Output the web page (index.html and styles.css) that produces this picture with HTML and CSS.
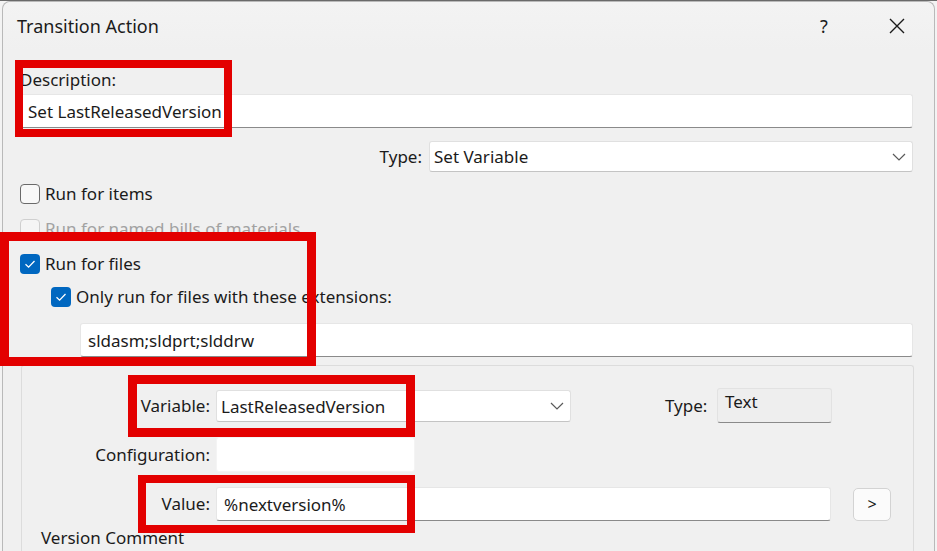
FILE: index.html
```html
<!DOCTYPE html>
<html>
<head>
<meta charset="utf-8">
<link rel="stylesheet" href="styles.css">
</head>
<body>
<div class="topstrip"></div>
<div class="dialog">
  <div class="titlebar">
    <span class="title">Transition Action</span>
    <span class="help">?</span>
    <span class="close">
      <svg width="18" height="18" viewBox="0 0 18 18"><path d="M2 2 L16 16 M16 2 L2 16" stroke="#1b1b1b" stroke-width="1.4" fill="none"/></svg>
    </span>
  </div>
  <div class="content">
    <div class="label desc-label">Description:</div>
    <div class="input desc-input">Set LastReleasedVersion</div>
    <div class="type-row">
      <span class="label">Type:</span>
      <div class="select type-select">
        <span>Set Variable</span>
        <svg class="chev" width="14" height="8" viewBox="0 0 14 8"><path d="M1 1 L7 7 L13 1" stroke="#5a5a5a" stroke-width="1.2" fill="none"/></svg>
      </div>
    </div>
    <div class="check-row items-row">
      <span class="box"></span><span class="label">Run for items</span>
    </div>
    <div class="check-row bom-row disabled">
      <span class="box"></span><span class="label">Run for named bills of materials</span>
    </div>
    <div class="check-row files-row">
      <span class="box checked"><svg width="20" height="20" viewBox="0 0 20 20"><path d="M5.5 10.2 L8.6 13.2 L14.5 7" stroke="#fff" stroke-width="1.3" fill="none"/></svg></span><span class="label">Run for files</span>
    </div>
    <div class="check-row only-row">
      <span class="box checked"><svg width="20" height="20" viewBox="0 0 20 20"><path d="M5.5 10.2 L8.6 13.2 L14.5 7" stroke="#fff" stroke-width="1.3" fill="none"/></svg></span><span class="label">Only run for files with these extensions:</span>
    </div>
    <div class="input ext-input">sldasm;sldprt;slddrw</div>
    <div class="group">
      <div class="grow var-row">
        <span class="glabel">Variable:</span>
        <div class="select var-select">
          <span>LastReleasedVersion</span>
          <svg class="chev" width="14" height="8" viewBox="0 0 14 8"><path d="M1 1 L7 7 L13 1" stroke="#5a5a5a" stroke-width="1.2" fill="none"/></svg>
        </div>
        <span class="label vtype-label">Type:</span>
        <div class="readonly">Text</div>
      </div>
      <div class="grow cfg-row">
        <span class="glabel">Configuration:</span>
        <div class="input cfg-input"></div>
      </div>
      <div class="grow val-row">
        <span class="glabel">Value:</span>
        <div class="input val-input">%nextversion%</div>
        <div class="btn">&gt;</div>
      </div>
      <div class="label vc-label">Version Comment</div>
    </div>
  </div>
</div>
<div class="redbox rb1"></div>
<div class="redbox rb2"></div>
<div class="redbox rb3"></div>
<div class="redbox rb4"></div>
</body>
</html>
```
FILE: styles.css
```css
html, body {
  margin: 0;
  padding: 0;
}
body {
  position: relative;
  width: 937px;
  height: 551px;
  overflow: hidden;
  background: #f3f3f3;
  font-family: "Noto Sans", "Open Sans", sans-serif;
  font-size: 17px;
  color: #1b1b1b;
}
.topstrip {
  height: 1px;
  background: #6a6a6a;
}
.dialog {
  margin: 0 2px 0 2px;
  height: 550px;
  overflow: hidden;
  border: 1px solid #b9b9b9;
  border-bottom: none;
  border-radius: 8px 8px 0 0;
  background: #f0f0f0;
  box-sizing: border-box;
}
.titlebar {
  height: 48px;
  display: flex;
  align-items: center;
  padding-left: 14px;
  background: linear-gradient(#f3f3f3, #f0f0f0);
  border-radius: 8px 8px 0 0;
}
.title {
  font-size: 18px;
  flex: 1;
}
.help {
  font-size: 18px;
  width: 20px;
  text-align: center;
  margin-right: 54px;
}
.close {
  width: 18px;
  height: 18px;
  margin-right: 28px;
  display: flex;
}
.content {
  padding: 0 21px 0 17px;
}
.label {
  line-height: 20px;
  white-space: nowrap;
}
.desc-label {
  margin-top: 20px;
}
.input {
  background: #fff;
  border: 1px solid #e6e6e6;
  border-bottom: 1px solid #8a8a8a;
  border-radius: 3px;
  box-sizing: border-box;
  display: flex;
  align-items: center;
  padding-left: 7px;
  white-space: nowrap;
}
.desc-input {
  margin-top: 4px;
  height: 34px;
}
.type-row {
  margin-top: 13px;
  height: 31px;
  display: flex;
  justify-content: flex-end;
  align-items: center;
  gap: 7px;
}
.select {
  background: #fff;
  border: 1px solid #e0e0e0;
  border-bottom: 1px solid #c4c4c4;
  border-radius: 3px;
  box-sizing: border-box;
  display: flex;
  align-items: center;
  justify-content: space-between;
  padding: 0 6px 0 4px;
  white-space: nowrap;
}
.type-select {
  width: 484px;
  height: 31px;
}
.check-row {
  display: flex;
  align-items: center;
  height: 20px;
  gap: 5px;
}
.box {
  width: 20px;
  height: 20px;
  box-sizing: border-box;
  border: 1px solid #6a6a6a;
  border-radius: 4px;
  background: #f8f8f8;
  flex: none;
  display: flex;
}
.box.checked {
  border: none;
  background: #0067c0;
}
.items-row {
  margin-top: 12px;
}
.bom-row {
  margin-top: 15px;
}
.disabled .box {
  border-color: #cfcfcf;
  background: #f5f5f5;
}
.disabled .label {
  color: #a2a2a2;
}
.files-row {
  margin-top: 15px;
}
.only-row {
  margin-top: 13px;
  margin-left: 31px;
}
.ext-input {
  margin-top: 16px;
  margin-left: 60px;
  height: 34px;
}
.group {
  margin: 8px -1px 0 1px;
  border: 1px solid #dcdcdc;
  border-bottom: none;
  border-radius: 3px 3px 0 0;
  padding-top: 24px;
  height: 190px;
  box-sizing: border-box;
  background: #f0f0f0;
}
.grow {
  display: flex;
  align-items: center;
}
.glabel {
  width: 188px;
  text-align: right;
  margin-right: 6px;
  white-space: nowrap;
  line-height: 20px;
}
.var-row {
  height: 32px;
}
.var-select {
  width: 355px;
  height: 32px;
}
.vtype-label {
  margin-left: 94px;
  width: 45px;
}
.readonly {
  margin-left: 7px;
  width: 115px;
  height: 35px;
  box-sizing: border-box;
  background: #eeeeee;
  border: 1px solid #e2e2e2;
  border-bottom: 1px solid #8a8a8a;
  border-radius: 3px;
  padding: 2px 0 0 7px;
  line-height: 22px;
  align-self: flex-start;
  margin-top: -2px;
}
.cfg-row {
  margin-top: 15px;
  height: 35px;
}
.cfg-input {
  width: 199px;
  height: 35px;
  border-bottom-color: #f0f0f0;
  border-color: #f4f4f4;
}
.val-row {
  margin-top: 15px;
  height: 34px;
}
.val-input {
  width: 615px;
  height: 34px;
}
.btn {
  margin-left: 22px;
  width: 38px;
  height: 33px;
  box-sizing: border-box;
  border: 1px solid #d3d3d3;
  border-radius: 5px;
  background: #fbfbfb;
  display: flex;
  align-items: center;
  justify-content: center;
  font-size: 16px;
}
.vc-label {
  margin-top: 7px;
  margin-left: 19px;
}
.redbox {
  position: absolute;
  box-sizing: border-box;
  border: 8px solid #e30000;
}
.rb1 {
  left: 15px;
  top: 60px;
  width: 217px;
  height: 77px;
}
.rb2 {
  left: 0;
  top: 232px;
  width: 316px;
  height: 134px;
  border-width: 9px;
}
.rb3 {
  left: 128px;
  top: 375px;
  width: 287px;
  height: 62px;
  border-width: 9px;
}
.rb4 {
  left: 138px;
  top: 475px;
  width: 277px;
  height: 58px;
}
```
